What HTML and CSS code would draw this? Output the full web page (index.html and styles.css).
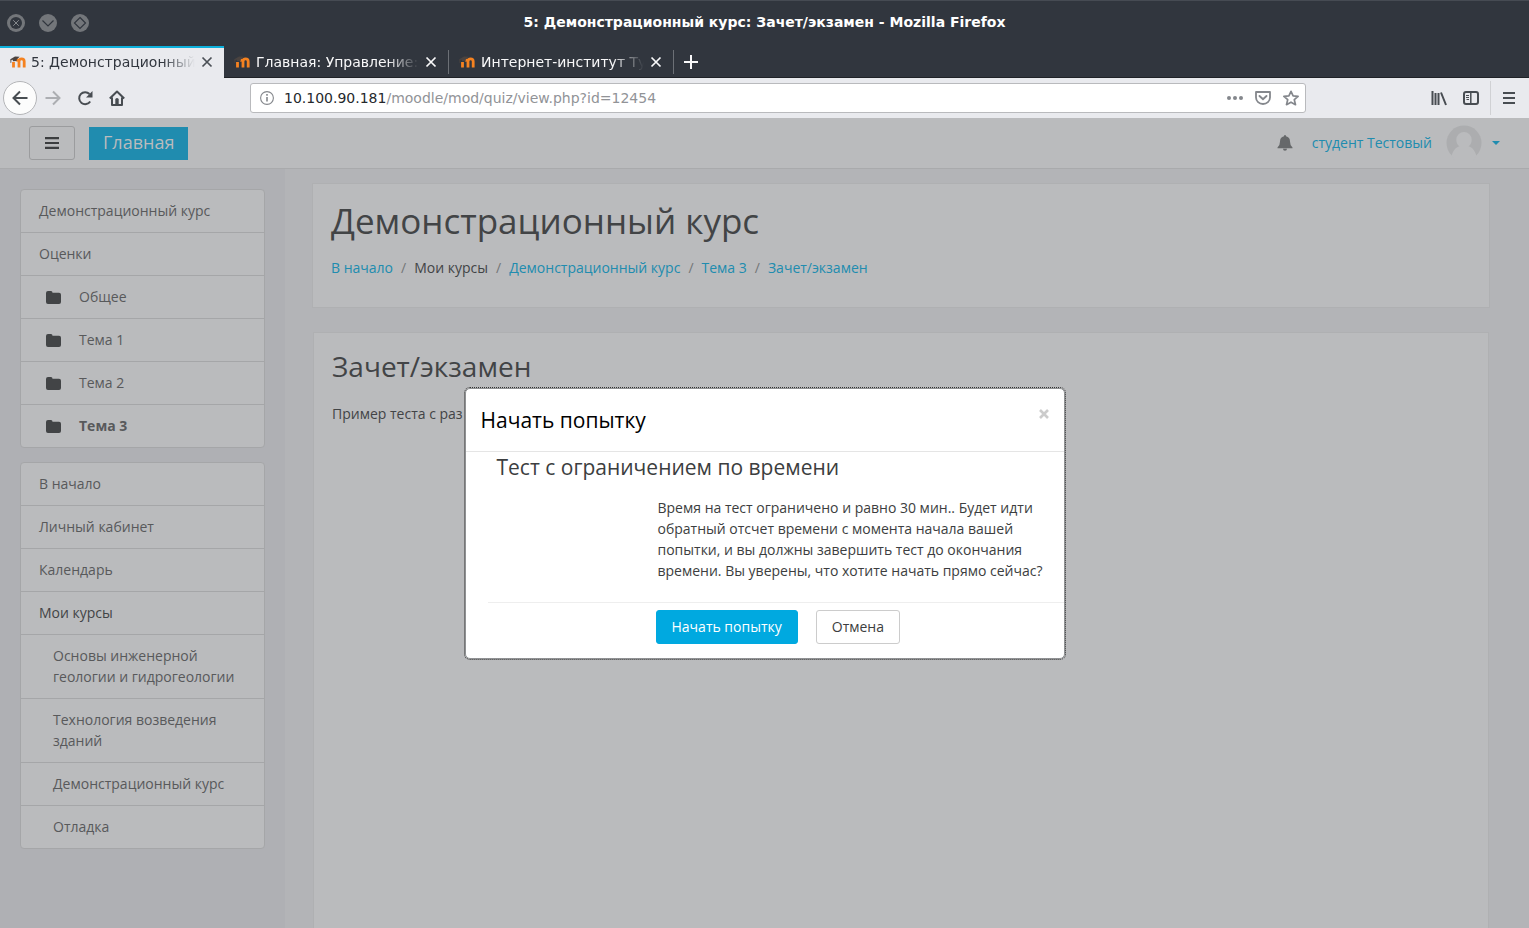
FILE: index.html
```
<!DOCTYPE html>
<html lang="ru">
<head>
<meta charset="utf-8">
<title>5: Демонстрационный курс: Зачет/экзамен</title>
<link rel="stylesheet" href="styles.css">
</head>
<body>
<svg class="defs" aria-hidden="true">
  <symbol id="moodle" viewBox="0 0 16 12">
    <path d="M3.500 11.500V6M9 11.500V5.500a2 2 0 0 0-3.400-.8M9 11.500V5.500a2.600 2.600 0 0 1 5.200 0v6" fill="none" stroke="#f58220" stroke-width="2.800"/>
    <path d="M.3 3.200 5 .4l4.600.4-2.800 2.600-.2 1.500-3.600.3-.3-1.400-1.300.2-.2 3-.6-.1Z" fill="#4a4340"/>
  </symbol>
  <symbol id="close" viewBox="0 0 12 12"><path d="m1.500 1.500 9 9m0-9-9 9" fill="none" stroke="currentColor" stroke-width="1.700"/></symbol>
  <symbol id="folder" viewBox="0 0 15 13"><path d="M0 2Q0 0 2 0h3q1.500 0 1.500 1.800H13q2 0 2 2V11q0 2-2 2H2q-2 0-2-2Z" fill="currentColor"/></symbol>
</svg>

<header class="titlebar">
  <div class="window-buttons">
    <button aria-label="Закрыть окно"><svg viewBox="0 0 18 18"><circle cx="9" cy="9" r="9" fill="#73767a"/><circle cx="9" cy="9" r="6" fill="#31363e"/><path d="m6.200 6.200 5.600 5.600m0-5.600-5.600 5.600" stroke="#85888c" fill="none"/></svg></button>
    <button aria-label="Свернуть"><svg viewBox="0 0 18 18"><circle cx="9" cy="9" r="9" fill="#73767a"/><path d="m3.500 6.500 5.500 5.500 5.500-5.500" stroke="#31363e" fill="none" stroke-width="1.200"/></svg></button>
    <button aria-label="Развернуть"><svg viewBox="0 0 18 18"><circle cx="9" cy="9" r="9" fill="#73767a"/><path d="M9 3.500 14.500 9 9 14.500 3.500 9Z" stroke="#31363e" fill="none" stroke-width="1.200"/></svg></button>
  </div>
  <div class="window-title">5: Демонстрационный курс: Зачет/экзамен - Mozilla Firefox</div>
</header>

<div class="tabs">
  <div class="tab active"><svg class="favicon"><use href="#moodle"/></svg><span class="tab-title">5: Демонстрационный</span><button class="tab-close" aria-label="Закрыть вкладку"><svg><use href="#close"/></svg></button></div>
  <div class="tab"><svg class="favicon"><use href="#moodle"/></svg><span class="tab-title">Главная: Управление:</span><button class="tab-close" aria-label="Закрыть вкладку"><svg><use href="#close"/></svg></button></div>
  <div class="tab"><svg class="favicon"><use href="#moodle"/></svg><span class="tab-title">Интернет-институт Ту</span><button class="tab-close" aria-label="Закрыть вкладку"><svg><use href="#close"/></svg></button></div>
  <button class="new-tab" aria-label="Новая вкладка"><svg viewBox="0 0 14 14"><path d="M7 0v14M0 7h14" stroke="currentColor" stroke-width="2"/></svg></button>
</div>

<nav class="toolbar" aria-label="Навигация браузера">
  <div class="nav-buttons">
    <button class="back" aria-label="Назад"><svg viewBox="0 0 16 16"><path d="M15.500 8H1.500M8 1.500 1.500 8 8 14.500" fill="none" stroke="currentColor" stroke-width="2"/></svg></button>
    <button class="forward" aria-label="Вперед"><svg viewBox="0 0 16 16"><path d="M.5 8h14M8 1.500 14.500 8 8 14.500" fill="none" stroke="currentColor" stroke-width="2"/></svg></button>
    <button aria-label="Обновить"><svg viewBox="0 0 16 16"><path d="M13.200 11.500A6 6 0 1 1 12.500 4" fill="none" stroke="currentColor" stroke-width="2"/><path d="M15.500 1v6.500H9Z" fill="currentColor"/></svg></button>
    <button aria-label="Домой"><svg viewBox="0 0 16 16"><path d="M.8 8.500 8 1.500l7.200 7M3 7.500V15h10V7.500" fill="none" stroke="currentColor" stroke-width="2" stroke-linejoin="round"/><path d="M6.300 15V9.500q0-1.500 1.700-1.500t1.700 1.500V15Z" fill="currentColor"/></svg></button>
  </div>
  <div class="urlbar">
    <svg class="info" viewBox="0 0 14 14"><circle cx="7" cy="7" r="6.400" fill="none" stroke="currentColor" stroke-width="1.100"/><path d="M7 6v4.500M7 3v1.800" stroke="currentColor" stroke-width="1.600"/></svg>
    <a class="url" href="#"><b>10.100.90.181</b>/moodle/mod/quiz/view.php?id=12454</a>
    <button aria-label="Действия"><svg viewBox="0 0 16 16"><circle cx="2" cy="8" r="2" fill="currentColor"/><circle cx="8" cy="8" r="2" fill="currentColor"/><circle cx="14" cy="8" r="2" fill="currentColor"/></svg></button>
    <button aria-label="Pocket"><svg viewBox="0 0 16 16"><path d="M1 2h14v5.500a7 6.500 0 0 1-14 0Z" fill="none" stroke="currentColor" stroke-width="1.800" stroke-linejoin="round"/><path d="m4.500 6 3.500 3.300L11.500 6" fill="none" stroke="currentColor" stroke-width="1.900" stroke-linecap="round"/></svg></button>
    <button aria-label="Закладка"><svg viewBox="0 0 16 16"><path d="m8 1.300 2.100 4.600 5 .5-3.800 3.300 1.200 5L8 12.200l-4.500 2.500 1.200-5L.9 6.400l5-.5Z" fill="none" stroke="currentColor" stroke-width="1.700" stroke-linejoin="round"/></svg></button>
  </div>
  <div class="tool-buttons">
    <button aria-label="Библиотека"><svg viewBox="0 0 16 16"><path d="M1.500 1v14M4.500 3v12M7.500 3v12M10 2.500 15 15" fill="none" stroke="currentColor" stroke-width="2"/></svg></button>
    <button aria-label="Боковые панели"><svg viewBox="0 0 16 16"><rect x="1" y="2" width="14" height="12" rx="2" fill="none" stroke="currentColor" stroke-width="2"/><path d="M7.800 2v12" stroke="currentColor" stroke-width="1.500"/><path d="M3 5.500h3M3 7.500h3M3.500 9.500H6" stroke="currentColor"/></svg></button>
    <button class="menu" aria-label="Меню"><svg viewBox="0 0 16 16"><path d="M2 3h12M2 8h12M2 13h12" stroke="currentColor" stroke-width="2"/></svg></button>
  </div>
</nav>

<div class="viewport">
  <header class="site-header">
    <button class="drawer" aria-label="Боковая панель"><svg viewBox="0 0 14 12"><path d="M0 1.200h14M0 6h14M0 10.800h14" stroke="currentColor" stroke-width="2.200"/></svg></button>
    <a class="brand" href="#">Главная</a>
    <div class="user">
      <button class="bell" aria-label="Уведомления"><svg viewBox="0 0 16 16"><path d="M8 0q1 0 1 1.200 4 .8 4 5.300 0 4 2.500 6v.8H.5v-.8Q3 10.500 3 6.500 3 2 7 1.200 7 0 8 0ZM6 13.800h4a2 2 0 0 1-4 0Z" fill="currentColor"/></svg></button>
      <a href="#">студент Тестовый</a>
      <svg class="avatar" viewBox="0 0 36 36"><circle cx="18" cy="18" r="17.500" fill="#acadaf"/><path d="M18 7a7.700 7.700 0 0 1 7.700 7.700c0 3-1.300 5.300-3.200 6.500 3.800 1 6.500 4.300 7.800 9.300L27 36H9l-3.300-5.500c1.300-5 4-8.300 7.800-9.300-1.900-1.200-3.200-3.500-3.200-6.500A7.700 7.700 0 0 1 18 7Z" fill="#babbbd"/></svg>
      <button class="caret" aria-label="Меню пользователя"><svg viewBox="0 0 8 4"><path d="M0 0h8L4 4Z" fill="currentColor"/></svg></button>
    </div>
  </header>

  <div class="layout">
    <aside class="sidebar">
      <nav class="list" aria-label="Курс">
        <a href="#">Демонстрационный курс</a>
        <a href="#">Оценки</a>
        <a class="topic" href="#"><svg><use href="#folder"/></svg>Общее</a>
        <a class="topic" href="#"><svg><use href="#folder"/></svg>Тема 1</a>
        <a class="topic" href="#"><svg><use href="#folder"/></svg>Тема 2</a>
        <a class="topic current" href="#"><svg><use href="#folder"/></svg>Тема 3</a>
      </nav>
      <nav class="list" aria-label="Сайт">
        <a href="#">В начало</a>
        <a href="#">Личный кабинет</a>
        <a href="#">Календарь</a>
        <span>Мои курсы</span>
        <a class="nested" href="#">Основы инженерной геологии и гидрогеологии</a>
        <a class="nested" href="#">Технология возведения зданий</a>
        <a class="nested" href="#">Демонстрационный курс</a>
        <a class="nested" href="#">Отладка</a>
      </nav>
    </aside>
    <main class="content">
      <section class="card">
        <h1>Демонстрационный курс</h1>
        <ol class="breadcrumb">
          <li><a href="#">В начало</a></li><li>Мои курсы</li><li><a href="#">Демонстрационный курс</a></li><li><a href="#">Тема 3</a></li><li><a href="#">Зачет/экзамен</a></li>
        </ol>
      </section>
      <section class="card quiz">
        <h2>Зачет/экзамен</h2>
        <p>Пример теста с раз</p>
      </section>
    </main>
  </div>

  <div class="modal-layer">
    <div class="modal" role="dialog" aria-labelledby="modal-title">
      <div class="modal-header">
        <h3 id="modal-title">Начать попытку</h3>
        <button class="modal-close" aria-label="Закрыть"><svg viewBox="0 0 10 10"><path d="m1 1 8 8m0-8-8 8" stroke="currentColor" stroke-width="2.600"/></svg></button>
      </div>
      <form class="modal-body">
        <h4>Тест с ограничением по времени</h4>
        <p>Время на тест ограничено и равно 30 мин.. Будет идти обратный отсчет времени с момента начала вашей попытки, и вы должны завершить тест до окончания времени. Вы уверены, что хотите начать прямо сейчас?</p>
        <div class="actions">
          <button class="btn primary" type="button">Начать попытку</button>
          <button class="btn" type="button">Отмена</button>
        </div>
      </form>
    </div>
  </div>
</div>
</body>
</html>
```
FILE: styles.css
```
* { box-sizing: border-box; }
body {
  margin: 0;
  height: 100vh;
  display: flex;
  flex-direction: column;
  overflow: hidden;
  font: 14px/21px "Open Sans", "Noto Sans", sans-serif;
  color: #424446;
}
button { margin: 0; padding: 0; border: 0; background: none; color: inherit; font: inherit; display: flex; align-items: center; justify-content: center; flex: none; }
svg { display: block; flex: none; }
a { color: #208caf; text-decoration: none; }
h1, h2, h3, h4, p, ol { margin: 0; padding: 0; font-weight: 400; }
.defs { position: absolute; width: 0; height: 0; }

/* Window frame */
.titlebar, .tabs, .toolbar { flex: none; font-family: "DejaVu Sans", sans-serif; }
.titlebar { display: grid; grid-template-columns: 1fr auto 1fr; align-items: center; height: 46px; padding: 0 7px 2px; background: #31363e; border-top: 1px solid #464b53; color: #fff; }
.window-buttons { display: flex; gap: 14px; }
.window-buttons svg { width: 18px; height: 18px; }
.window-title { font-size: 14px; font-weight: 700; }

.tabs { display: flex; height: 32px; background: #31363e; color: #f9f9fa; box-shadow: inset 0 -1px #1f2227; }
.tab { display: flex; align-items: center; width: 225px; padding: 0 12px 0 10px; position: relative; }
.tab.active { width: 224px; padding-right: 11px; background: #e9eaee; color: #31363e; box-shadow: inset 0 2px #0cb0dc; }
.tab:not(.active)::after { content: ""; position: absolute; right: 0; top: 4px; bottom: 4px; width: 1px; background: #6c7076; }
.favicon { width: 16px; height: 12px; margin-right: 6px; }
.active .favicon { margin-right: 5px; }
.tab-title { flex: 1; min-width: 0; white-space: nowrap; font-size: 14px; mask-image: linear-gradient(to left, transparent, #000 32px); }
.tab-close { width: 12px; height: 12px; margin-left: 6px; }
.tab-close svg { width: 12px; height: 12px; }
.tab.active .tab-close { color: #4b5056; }
.new-tab { width: 34px; }
.new-tab svg { width: 14px; height: 14px; }

.toolbar { display: flex; align-items: center; height: 40px; padding: 0 2px 0 3px; background: #e9eaee; color: #484d52; }
.toolbar svg { width: 16px; height: 16px; }
.nav-buttons { display: flex; align-items: center; width: 247px; }
.nav-buttons button { width: 32px; height: 32px; }
.nav-buttons .back { width: 34px; height: 34px; border: 1px solid #b4b5b8; border-radius: 50%; background: #fcfcfc; }
.nav-buttons .forward { color: #acaeb2; }
.urlbar { display: flex; align-items: center; flex: 1; height: 30px; padding: 0 6px 0 9px; gap: 12px; border: 1px solid #b9babd; border-radius: 3px; background: #fff; color: #84878c; }
.urlbar .info { width: 14px; height: 14px; margin-right: -2px; }
.url { flex: 1; color: #919397; font-size: 14px; }
.url b { font-weight: 400; color: #25282c; }
.tool-buttons { display: flex; align-items: center; width: 221px; justify-content: flex-end; gap: 16px; }
.tool-buttons .menu { height: 34px; width: 37px; margin-left: -5px; border-left: 1px solid #d0d1d4; }

/* Dimmed site */
.viewport { position: relative; flex: 1; min-height: 0; display: flex; flex-direction: column; overflow: hidden; background: #b3b4b7; }
.site-header { display: flex; align-items: center; flex: none; height: 51px; padding: 0 29px; background: #babbbd; border-bottom: 1px solid #a9aaac; }
.drawer { width: 46px; height: 34px; border: 1px solid #9b9c9e; border-radius: 3px; color: #3c3e40; }
.drawer svg { width: 14px; height: 12px; }
.brand { margin-left: 14px; padding: 3px 14px 5px; background: #208caf; color: #babbbd; font-size: 18px; line-height: 25px; }
.user { display: flex; align-items: center; margin-left: auto; }
.user a { padding-bottom: 2px; }
.bell { color: #66686a; margin-right: 19px; }
.bell svg { width: 16px; height: 16px; }
.avatar { width: 36px; height: 36px; margin: 0 10px 0 14px; }
.caret { color: #208caf; }
.caret svg { width: 8px; height: 4px; }

.layout { display: flex; flex: 1; min-height: 0; }
.sidebar { width: 285px; flex: none; padding: 20px; background: #afb0b4; }
.list { margin-bottom: 14px; border: 1px solid #a5a6a8; border-radius: 4px; background: #babbbd; }
.list > * { display: flex; align-items: center; padding: 10px 18px 11px; color: #58595b; border-bottom: 1px solid #a5a6a8; }
.list > span { color: #424446; }
.list > :last-child { border-bottom: 0; }
.list .nested { padding-left: 32px; padding-right: 24px; }
.list .topic { padding-left: 25px; }
.list .current { font-weight: 700; }
.topic svg { width: 15px; height: 13px; margin: 2px 18px 0 0; color: #424446; }

.content { flex: 1; display: flex; flex-direction: column; padding: 14px 39px 0 27px; }
.card { border: 1px solid #afb0b2; background: #babbbd; padding: 17px 18px 18px; }
h1 { font-size: 35px; line-height: 39px; }
.breadcrumb { display: flex; list-style: none; margin-top: 17px; padding-bottom: 11px; }
.breadcrumb li + li::before { content: "/"; padding: 0 8px; color: #747678; }
.quiz { flex: 1; margin: 24px 1px 0; border-bottom: 0; }
h2 { font-size: 28px; line-height: 32px; margin-bottom: 21px; }

/* Dialog */
.modal-layer { position: absolute; inset: 0; display: flex; align-items: center; justify-content: center; }
.modal { width: 600px; border: 1px solid #8f9193; border-radius: 5px; background: #fff; outline: 1px dotted #333; color: #3c3e40; }
.modal-header { display: flex; justify-content: space-between; align-items: flex-start; padding: 15px; border-bottom: 1px solid #e5e5e5; }
.modal-header h3 { color: #000; font-size: 21px; line-height: 32px; }
.modal-close { width: 10px; height: 10px; margin-top: 5px; color: #ccc; }
.modal-close svg { width: 10px; height: 10px; }
.modal-body h4 { margin-left: 31px; font-size: 21px; line-height: 31px; }
.modal-body p { padding: 14px 10px 21px 192px; }
.actions { display: flex; gap: 18px; margin-left: 22px; padding: 7px 0 14px 168px; border-top: 1px solid #eee; }
.btn { height: 34px; padding: 0 15px; border: 1px solid #ccc; border-radius: 3px; background: #fff; }
.btn.primary { background: #00a9e0; border-color: #00a9e0; color: #fff; }
```
